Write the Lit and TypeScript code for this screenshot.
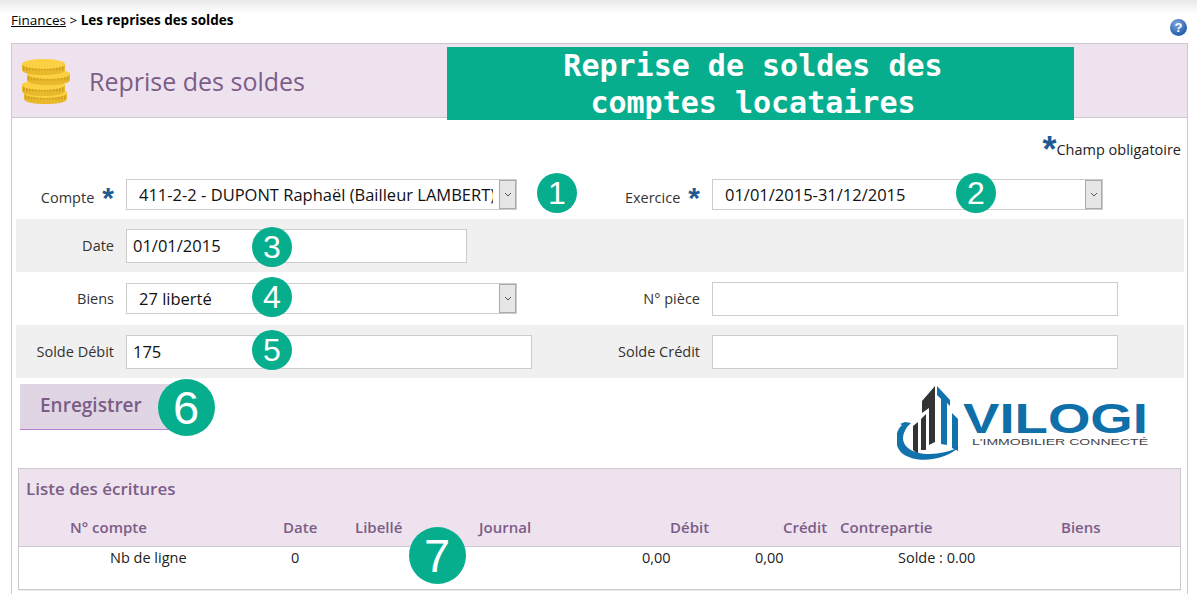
import { LitElement, css, html, svg } from "lit";
import { customElement } from "lit/decorators.js";

type Badge = { label: string; x: number; y: number; big?: boolean };

const BADGES: Badge[] = [
  { label: "1", x: 557, y: 193 },
  { label: "2", x: 976, y: 193 },
  { label: "3", x: 272, y: 247 },
  { label: "4", x: 272, y: 297 },
  { label: "5", x: 272, y: 350 },
  { label: "6", x: 186, y: 407, big: true },
  { label: "7", x: 437, y: 555, big: true },
];

const COLUMNS = ["N° compte", "Date", "Libellé", "Journal", "Débit", "Crédit", "Contrepartie", "Biens"];
const TOTALS = ["Nb de ligne", "0", "0,00", "0,00", "Solde : 0.00"];

function coin(x: number, y: number) {
  return svg`
    <path d="M${x} ${y + 5}v6c0 3 9 5 21.500 5s21.500-2 21.500-5v-6z" fill="#e9b92c" />
    <path d="M${x + 1} ${y + 9}h41" stroke="#cf9f1d" stroke-width="5" stroke-dasharray="1.500 1.500" fill="none" />
    <ellipse cx=${x + 21.5} cy=${y + 5} rx="21.500" ry="5" fill="#fbd042" />
  `;
}

const coins = html`
  <svg class="coins" width="50" height="46" viewBox="0 0 50 46">
    ${coin(2, 33 - 3)}${coin(0, 22)}${coin(5, 11)}${coin(0, 1)}
  </svg>
`;

const helpIcon = html`
  <div class="help">?</div>
`;

const logo = html`
  <svg class="logo" width="254" height="77" viewBox="0 0 254 77">
    <path d="M16 41l5-4v32l-5-4zM24 34l5-5v36h-5z" fill="#333" />
    <path d="M25 16l13-15v56l-6 3V23l-7 5z" fill="#333" />
    <path d="M40 1l13 14v6l-3-3v42l-6-1V14l-4-4z" fill="#1272ac" />
    <path d="M55 28l6 6v32l-6-3z" fill="#1272ac" />
    <path d="M8 37l6 1-4 4c-5 8-6 15 1 21 12 10 38 6 51-1-12 12-40 18-56 7C-4 61-2 46 5 40l-2-1z" fill="#1272ac" />
    <text class="logo-name" x="66" y="48" textLength="185" lengthAdjust="spacingAndGlyphs">VILOGI</text>
    <text class="logo-tag" x="75" y="60" textLength="176" lengthAdjust="spacingAndGlyphs">L'IMMOBILIER CONNECTÉ</text>
  </svg>
`;

function selectBox(value: string, extra = "") {
  return html`
    <div class="select ${extra}">
      <span class="select-value">${value}</span>
      <span class="select-arrow">
        <svg width="8" height="5" viewBox="0 0 8 5"><path d="M1 1l3 3 3-3" fill="none" stroke="#555" /></svg>
      </span>
    </div>
  `;
}

@customElement("app-root")
export class AppRoot extends LitElement {
  static styles = css`
    :host {
      display: block;
      height: 594px;
      overflow: hidden;
      position: relative;
      font-family: "Open Sans", "Noto Sans", sans-serif;
      font-size: 14px;
      color: #222;
      background: linear-gradient(#e9e9e9, #ffffff) no-repeat 0 0 / 100% 14px, #fff;
    }
    .crumbs {
      display: flex;
      justify-content: space-between;
      align-items: flex-start;
      height: 43px;
      padding: 11px 10px 0 11px;
      box-sizing: border-box;
      font-size: 13.500px;
      line-height: 18px;
      color: #000;
    }
    .crumbs a {
      color: #000;
      text-decoration: underline;
    }
    .crumbs b {
      font-weight: 700;
    }
    .help {
      width: 17px;
      height: 17px;
      margin-top: 8px;
      border-radius: 50%;
      background: radial-gradient(circle at 40% 30%, #7fa8dc, #2560ad 70%);
      color: #fff;
      font: 700 13px/17px "Liberation Sans", sans-serif;
      text-align: center;
    }
    .panel {
      margin: 0 9px 0 11px;
      border: 1px solid #cdc8ce;
      border-bottom: 0;
      height: 551px;
      box-sizing: border-box;
    }
    .head {
      display: flex;
      align-items: center;
      gap: 17px;
      height: 74px;
      padding-left: 10px;
      box-sizing: border-box;
      background: #eee2ef;
      border-bottom: 1px solid #cdc8ce;
    }
    .coins {
      flex: none;
    }
    .head h1 {
      margin: 0;
      font-size: 25px;
      font-weight: 400;
      color: #7b5d87;
    }
    .banner {
      position: absolute;
      left: 447px;
      top: 47px;
      width: 627px;
      height: 73px;
      padding-right: 15px;
      box-sizing: border-box;
      background: #07ae8e;
      color: #fff;
      font: 700 30px/37px "DejaVu Sans Mono", monospace;
      text-align: center;
      overflow: hidden;
    }
    .required {
      display: flex;
      justify-content: flex-end;
      height: 48px;
      padding: 14px 6px 0 0;
      box-sizing: border-box;
      font-size: 14.500px;
      line-height: 36px;
    }
    .star {
      color: #1d5a92;
      font: 700 36px/36px "Liberation Sans", sans-serif;
    }
    .row {
      display: grid;
      grid-template-columns: 98px 474px 88px 405px;
      column-gap: 12px;
      align-items: center;
      height: 53px;
      margin: 0 3px 0 4px;
      padding-top: 0;
    }
    .row.shaded {
      background: #f0f0f0;
    }
    .row.first {
      padding-top: 4px;
      box-sizing: border-box;
    }
    .label {
      display: flex;
      justify-content: flex-end;
      white-space: nowrap;
      font-size: 14.500px;
      color: #333;
    }
    .label.with-star {
      padding-top: 7px;
      gap: 8px;
      line-height: 20px;
    }
    .label .star {
      font-size: 30px;
      line-height: 20px;
    }
    .field {
      display: block;
      height: 34px;
      padding: 0 6px;
      box-sizing: border-box;
      border: 1px solid #cccccc;
      background: #fff;
      font: 16.500px "Open Sans", sans-serif;
      color: #111;
      outline: none;
    }
    .w-341 {
      width: 341px;
    }
    .w-406 {
      width: 406px;
    }
    .select {
      display: flex;
      align-items: center;
      width: 391px;
      height: 31px;
      box-sizing: border-box;
      border: 1px solid #cccccc;
      background: #fff;
      font-size: 16.500px;
      color: #111;
    }
    .select-value {
      flex: 1;
      min-width: 0;
      padding-left: 12px;
      overflow: hidden;
      white-space: nowrap;
    }
    .select-arrow {
      flex: none;
      display: flex;
      align-items: center;
      justify-content: center;
      width: 17px;
      height: 29px;
      margin-left: 6px;
      box-sizing: border-box;
      border: 1px solid #aaaaaa;
      background: #e6e6e6;
    }
    .actions {
      display: flex;
      align-items: flex-start;
      height: 90px;
      padding: 6px 36px 0 8px;
      box-sizing: border-box;
    }
    .save {
      width: 150px;
      height: 46px;
      padding: 0 0 4px 20px;
      box-sizing: border-box;
      border: 0;
      border-bottom: 1px solid #b67fd8;
      background: #e0d6e3;
      color: #7b5d87;
      font: 600 19px "Open Sans", sans-serif;
      text-align: left;
    }
    .logo {
      margin: 1px 0 0 auto;
    }
    .logo-name {
      font: 700 42px "Liberation Sans", sans-serif;
      fill: #0f6fa9;
    }
    .logo-tag {
      font: 400 9px "Liberation Sans", sans-serif;
      fill: #444;
    }
    .list {
      margin: 0 6px;
      height: 122px;
      box-sizing: border-box;
      border: 1px solid #cdc8ce;
      box-shadow: 0 1px 0 #eee;
    }
    .list-head {
      height: 78px;
      box-sizing: border-box;
      padding: 8px 0 0 7px;
      background: #eee2ef;
      border-bottom: 1px solid #cdc8ce;
      color: #7b5d87;
    }
    .list-head h2 {
      margin: 0;
      font-size: 17px;
      font-weight: 600;
      line-height: 24px;
    }
    .cols {
      display: grid;
      grid-template-columns: 213px 72px 124px 191px 113px 57px 221px 1fr;
      margin: 16px 0 0 44px;
      font-size: 15px;
      font-weight: 600;
      line-height: 20px;
    }
    .totals {
      display: grid;
      grid-template-columns: 181px 351px 113px 143px 1fr;
      padding: 1px 0 0 91px;
      font-size: 14.500px;
      line-height: 20px;
      color: #222;
    }
    .badge {
      position: absolute;
      width: 40px;
      height: 40px;
      margin: -20px 0 0 -20px;
      border-radius: 50%;
      background: #07ae8e;
      color: #fff;
      font: 400 32px/40px "Liberation Sans", sans-serif;
      text-align: center;
    }
    .badge.big {
      width: 57px;
      height: 57px;
      margin: -28.500px 0 0 -28.500px;
      font-size: 47px;
      line-height: 57px;
    }
  `;

  render() {
    return html`
      <div class="crumbs">
        <div><a href="#">Finances</a> &gt; <b>Les reprises des soldes</b></div>
        ${helpIcon}
      </div>
      <div class="panel">
        <div class="head">
          ${coins}
          <h1>Reprise des soldes</h1>
        </div>
        <div class="required"><span class="star">*</span><span>Champ obligatoire</span></div>
        <div class="row first">
          <div class="label with-star"><span>Compte</span><span class="star">*</span></div>
          ${selectBox("411-2-2 - DUPONT Raphaël (Bailleur LAMBERT)")}
          <div class="label with-star"><span>Exercice</span><span class="star">*</span></div>
          ${selectBox("01/01/2015-31/12/2015")}
        </div>
        <div class="row shaded">
          <div class="label">Date</div>
          <input class="field w-341" .value=${"01/01/2015"} />
        </div>
        <div class="row">
          <div class="label">Biens</div>
          ${selectBox("27 liberté")}
          <div class="label">N° pièce</div>
          <input class="field w-406" />
        </div>
        <div class="row shaded">
          <div class="label">Solde Débit</div>
          <input class="field w-406" .value=${"175"} />
          <div class="label">Solde Crédit</div>
          <input class="field w-406" />
        </div>
        <div class="actions">
          <button class="save">Enregistrer</button>
          ${logo}
        </div>
        <div class="list">
          <div class="list-head">
            <h2>Liste des écritures</h2>
            <div class="cols">${COLUMNS.map((c) => html`<span>${c}</span>`)}</div>
          </div>
          <div class="totals">${TOTALS.map((c) => html`<span>${c}</span>`)}</div>
        </div>
      </div>
      <div class="banner">Reprise de soldes des<br />comptes locataires</div>
      ${BADGES.map(
        (b) => html`
          <div class="badge ${b.big ? "big" : ""}" style="left:${b.x}px;top:${b.y}px">${b.label}</div>
        `,
      )}
    `;
  }
}
